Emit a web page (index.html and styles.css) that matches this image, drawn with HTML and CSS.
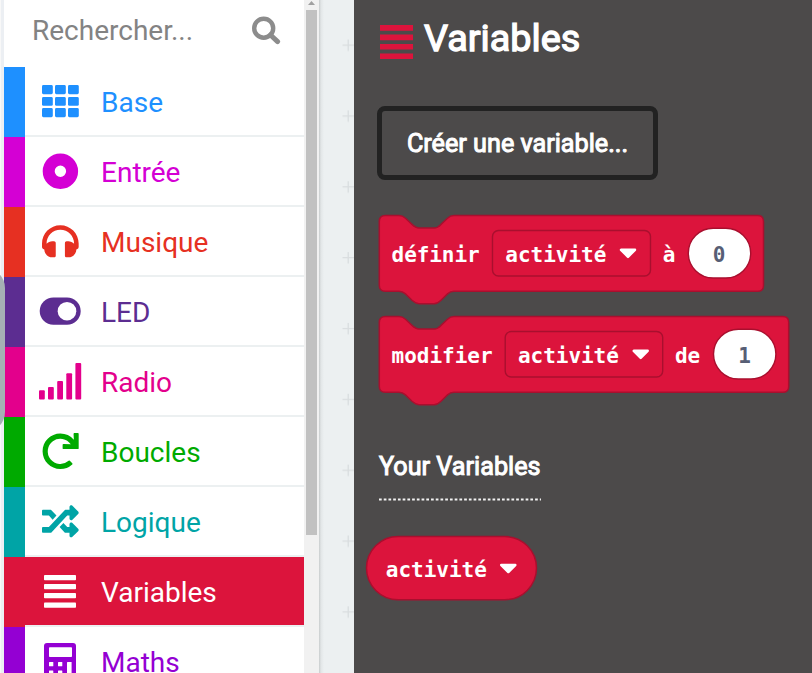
FILE: index.html
```html
<!DOCTYPE html>
<html lang="fr">
<head>
<meta charset="utf-8">
<title>Variables</title>
<link rel="stylesheet" href="styles.css">
</head>
<body>
<div class="editor">
  <div class="gutter"><span class="handle"></span></div>
  <nav class="toolbox">
    <div class="search"><span>Rechercher...</span>
      <svg class="search-icon" width="30" height="30" viewBox="0 0 30 30"><circle cx="12.7" cy="12.2" r="9.5" fill="none" stroke="#8c8c8c" stroke-width="4.4"/><path d="M19.5 19L26.6 25.6" stroke="#8c8c8c" stroke-width="5" stroke-linecap="round"/></svg>
    </div>
    <div class="row base"><div class="cell"><svg class="icon" viewBox="0 0 44 68"><g><rect x="4" y="18" width="10.8" height="9.2" rx="1.4"/><rect x="17" y="18" width="10.8" height="9.2" rx="1.4"/><rect x="30" y="18" width="10.8" height="9.2" rx="1.4"/><rect x="4" y="30" width="10.8" height="8.8" rx="1.4"/><rect x="17" y="30" width="10.8" height="8.8" rx="1.4"/><rect x="30" y="30" width="10.8" height="8.8" rx="1.4"/><rect x="4" y="41" width="10.8" height="9.2" rx="1.4"/><rect x="17" y="41" width="10.8" height="9.2" rx="1.4"/><rect x="30" y="41" width="10.8" height="9.2" rx="1.4"/></g></svg><span>Base</span></div></div>
    <div class="row input"><div class="cell"><svg class="icon" viewBox="0 0 44 68"><circle cx="22.4" cy="34.3" r="11.7" fill="none" stroke="currentColor" stroke-width="12"/></svg><span>Entrée</span></div></div>
    <div class="row music"><div class="cell"><svg class="icon" viewBox="0 0 44 68"><path transform="translate(4 16) scale(.0716)" d="M256 32C114.52 32 0 146.497 0 288v48a32 32 0 0 0 17.689 28.622l14.383 7.191C34.083 431.903 83.421 480 144 480h24c13.255 0 24-10.745 24-24V280c0-13.255-10.745-24-24-24h-24c-31.342 0-59.671 12.879-80 33.627V288c0-105.869 86.131-192 192-192s192 86.131 192 192v1.627C427.671 268.879 399.342 256 368 256h-24c-13.255 0-24 10.745-24 24v176c0 13.255 10.745 24 24 24h24c60.579 0 109.917-48.098 111.928-108.187l14.382-7.191A32 32 0 0 0 512 336v-48c0-141.479-114.496-256-256-256z"/></svg><span>Musique</span></div></div>
    <div class="row led"><div class="cell"><svg class="icon" viewBox="0 0 44 68"><rect x="1.7" y="20.4" width="41" height="27.4" rx="13.7"/><circle cx="29" cy="34.2" r="9.3" fill="#fff"/></svg><span>LED</span></div></div>
    <div class="row radio"><div class="cell"><svg class="icon" viewBox="0 0 44 68"><rect x="1" y="43.3" width="5.8" height="9.2" rx="1"/><rect x="10" y="40" width="5.8" height="12.5" rx="1"/><rect x="19.2" y="34" width="5.8" height="18.5" rx="1"/><rect x="28.3" y="26.3" width="5.8" height="26.2" rx="1"/><rect x="37.4" y="16" width="5.8" height="36.5" rx="1"/></svg><span>Radio</span></div></div>
    <div class="row loops"><div class="cell"><svg class="icon" viewBox="0 0 44 68"><path transform="translate(4 16) scale(.0716)" d="M500.33 0h-47.41a12 12 0 0 0-12 12.57l4 82.76A247.42 247.42 0 0 0 256 8C119.34 8 7.9 119.53 8 256.19 8.1 393.07 119.1 504 256 504a247.1 247.1 0 0 0 166.18-63.91 12 12 0 0 0 .48-17.43l-34-34a12 12 0 0 0-16.38-.55A176 176 0 1 1 402.1 157.8l-101.53-4.87a12 12 0 0 0-12.57 12v47.41a12 12 0 0 0 12 12h200.33a12 12 0 0 0 12-12V12a12 12 0 0 0-12-12z"/></svg><span>Boucles</span></div></div>
    <div class="row logic"><div class="cell"><svg class="icon" viewBox="0 0 44 68"><path transform="translate(4 16) scale(.0716)" d="M504.971 359.029c9.373 9.373 9.373 24.569 0 33.941l-80 79.984c-15.01 15.01-40.971 4.49-40.971-16.971V416h-58.785a12.004 12.004 0 0 1-8.773-3.812l-70.556-75.596 53.333-57.143L352 336h32v-39.981c0-21.438 25.943-31.998 40.971-16.971l80 79.981zM12 176h84l52.781 56.551 53.333-57.143-70.556-75.596A11.999 11.999 0 0 0 122.785 96H12c-6.627 0-12 5.373-12 12v56c0 6.627 5.373 12 12 12zm372 0v39.984c0 21.46 25.961 31.98 40.971 16.971l80-79.984c9.373-9.373 9.373-24.569 0-33.941l-80-79.981C409.943 24.021 384 34.582 384 56.019V96h-58.785a12.004 12.004 0 0 0-8.773 3.812L96 336H12c-6.627 0-12 5.373-12 12v56c0 6.627 5.373 12 12 12h110.785c3.326 0 6.503-1.381 8.773-3.812L352 176h32z"/></svg><span>Logique</span></div></div>
    <div class="row variables"><div class="cell"><svg class="icon" viewBox="0 0 44 68"><rect x="6" y="18" width="32" height="5.2" rx=".8"/><rect x="6" y="27" width="32" height="5.2" rx=".8"/><rect x="6" y="36.1" width="32" height="5.2" rx=".8"/><rect x="6" y="45.5" width="32" height="5.2" rx=".8"/></svg><span>Variables</span></div></div>
    <div class="row maths"><div class="cell"><svg class="icon" viewBox="0 0 44 68"><rect x="6" y="16" width="32" height="36.5" rx="3"/><g fill="#fff"><rect x="11" y="20.3" width="23" height="9.7" rx=".8"/><rect x="11" y="35" width="4.3" height="4.3" rx=".5"/><rect x="20" y="35" width="4.3" height="4.3" rx=".5"/><rect x="29" y="35" width="4.6" height="13" rx=".5"/><rect x="11" y="43.5" width="4.3" height="4.3" rx=".5"/><rect x="20" y="43.5" width="4.3" height="4.3" rx=".5"/></g></svg><span>Maths</span></div></div>
  </nav>
  <div class="scrollbar"><svg class="arrow" width="15" height="10" viewBox="0 0 15 10"><path d="M4 5L7.5 1L11 5Z" fill="#a0a0a0"/></svg><div class="thumb"></div></div>
  <div class="workspace">
    <svg width="35" height="673" viewBox="0 0 35 673"><defs><pattern id="grid" x="0" y="9.6" width="80" height="70.85" patternUnits="userSpaceOnUse"><path d="M23.5 35.6h12M29.2 30v11.4" stroke="#d9dddf" stroke-width="1.3"/></pattern></defs><rect width="35" height="673" fill="url(#grid)"/></svg>
  </div>
  <main class="flyout">
    <header class="heading"><svg width="33" height="36" viewBox="0 0 33 36"><path d="M0 2.9h33M0 12.4h33M0 21.7h33M0 31.3h33" stroke="#dc143c" stroke-width="5.6"/></svg><h1>Variables</h1></header>
    <div class="create">Créer une variable...</div>
    <svg class="block" width="442" height="101" viewBox="0 0 442 101">
      <path class="shape" d="M15.3 10.6H29C32 10.6 33.5 11.5 35.5 13.2L42 19.4C45 22.2 46 23 49 23H64C67 23 68.5 22 71 19.4L77.5 13.2C79.5 11.3 81 10.6 84 10.6H387.7Q393.5 10.6 393.5 16.4V80.4Q393.5 86.2 387.7 86.2H84C81 86.2 79.5 87 77.5 88.9L71 95.3C68.5 97.8 67 98.7 64 98.7H49C46 98.7 45 97.9 42 95.3L35.5 88.9C33.5 87.1 32 86.2 29 86.2H15.3Q9.3 86.2 9.3 80.2V16.6Q9.3 10.6 15.3 10.6Z"/>
      <text x="21.6" y="57" textLength="88">définir</text>
      <rect class="field" x="122.5" y="25.5" width="158" height="45.5" rx="6"/>
      <text x="135.3" y="57" textLength="101">activité</text>
      <path class="caret" d="M251 44.8H265L258 51.8Z"/>
      <text x="292.7" y="57">à</text>
      <rect class="value" x="318.3" y="23.2" width="62.4" height="49.8" rx="24.9"/>
      <text class="num" x="349.2" y="57">0</text>
    </svg>
    <svg class="block" width="442" height="101" viewBox="0 0 442 101">
      <path class="shape" d="M15.3 10.6H29C32 10.6 33.5 11.5 35.5 13.2L42 19.4C45 22.2 46 23 49 23H64C67 23 68.5 22 71 19.4L77.5 13.2C79.5 11.3 81 10.6 84 10.6H412.9Q418.7 10.6 418.7 16.4V80.4Q418.7 86.2 412.9 86.2H84C81 86.2 79.5 87 77.5 88.9L71 95.3C68.5 97.8 67 98.7 64 98.7H49C46 98.7 45 97.9 42 95.3L35.5 88.9C33.5 87.1 32 86.2 29 86.2H15.3Q9.3 86.2 9.3 80.2V16.6Q9.3 10.6 15.3 10.6Z"/>
      <text x="21.6" y="57" textLength="101">modifier</text>
      <rect class="field" x="135.2" y="25.5" width="157.5" height="45.5" rx="6"/>
      <text x="147.9" y="57" textLength="101">activité</text>
      <path class="caret" d="M263.7 44.8H277.7L270.7 51.8Z"/>
      <text x="305" y="57" textLength="25.2">de</text>
      <rect class="value" x="343.5" y="23.2" width="62.4" height="49.8" rx="24.9"/>
      <text class="num" x="374.5" y="57">1</text>
    </svg>
    <h2>Your Variables</h2>
    <svg class="dots" width="163" height="3" viewBox="0 0 163 3"><path d="M0 1.5H162" stroke="#f2f2f2" stroke-width="2" stroke-dasharray="2.7 2.03"/></svg>
    <svg class="pill" width="174" height="66" viewBox="0 0 174 66">
      <rect class="shape" x="1.5" y="1.5" width="170" height="63.2" rx="31.6"/>
      <text x="20.8" y="42" textLength="101">activité</text>
      <path class="caret" d="M136.3 30H150.3L143.3 37Z"/>
    </svg>
  </main>
</div>
</body>
</html>
```
FILE: styles.css
```css
* { box-sizing: border-box; }
body { margin: 0; font-family: Roboto, sans-serif; overflow: hidden; }
.editor { display: flex; height: 673px; overflow: hidden; background: #fff; }
.gutter { position: relative; width: 4px; background: #eceff3; border-left: 1px solid #f8f8f8; }
.handle { position: absolute; left: -36px; top: 268px; width: 40px; height: 164px; border-radius: 20px; background: #a5b0b4; z-index: 2; }
.toolbox { width: 300px; height: 673px; overflow: hidden; }
.search { display: flex; justify-content: space-between; align-items: center; height: 67px; padding: 0 23px 6px 28px; font-size: 28px; color: #838383; }
.row { height: 70px; padding-left: 21px; background: currentColor; }
.cell { display: flex; height: 70px; background: #fff; border-bottom: 2px solid #ecf0f1; padding-left: 13px; font-size: 28px; line-height: 72px; }
.cell span { margin-left: 19px; }
.icon { width: 44px; height: 68px; fill: currentColor; }
.base { color: #1e90ff; }
.input { color: #d400d4; }
.music { color: #e63022; }
.led { color: #5c2d91; }
.radio { color: #e3008c; }
.loops { color: #00aa00; }
.logic { color: #00a4a6; }
.variables { color: #dc143c; }
.variables .cell { background: #dc143c; color: #fff; }
.maths { color: #9400d3; }
.scrollbar { width: 15px; background: #f1f1f1; padding: 0 2px; }
.arrow { display: block; margin-left: -2px; }
.thumb { height: 525px; background: #c1c1c1; width: 11px; }
.workspace { width: 35px; background: linear-gradient(90deg, #c8cccd 0, #e2e6e7 2px, #ecf0f1 5px); }
.workspace svg { display: block; }
.flyout { flex: 1; display: flex; flex-direction: column; align-items: flex-start; background: #4c4a4a; color: #fff; padding-left: 16px; }
.heading { display: flex; align-items: flex-start; height: 106px; padding: 25px 0 0 10px; }
h1 { margin: -10px 0 0 11px; font-size: 37.8px; line-height: 46px; font-weight: 400; -webkit-text-stroke: 1.3px #fff; }
.create { width: 281px; height: 74px; margin: 0 0 25px 7px; border: 5px solid #222; border-radius: 8px; text-align: center; line-height: 65px; font-size: 25.2px; -webkit-text-stroke: 1px #fff; white-space: nowrap; }
.block { display: block; flex: none; }
text { font: bold 21px "DejaVu Sans Mono", monospace; fill: #fff; }
.shape { fill: #dc143c; stroke: #a90f2e; stroke-width: 1.5; }
.field { fill: none; stroke: #a90f2e; stroke-width: 1.4; }
.value { fill: #fff; stroke: #a90f2e; stroke-width: 1.4; }
.num { fill: #575e75; text-anchor: middle; }
.caret { fill: #fff; stroke: #fff; stroke-width: 2.5; stroke-linejoin: round; }
h2 { margin: 45px 0 0 9px; font-size: 25.2px; line-height: 30px; font-weight: 400; -webkit-text-stroke: 1px #fff; }
.dots { display: block; margin: 16px 0 0 9px; flex: none; }
.pill { display: block; flex: none; margin: 34px 0 0 -5px; }
```
